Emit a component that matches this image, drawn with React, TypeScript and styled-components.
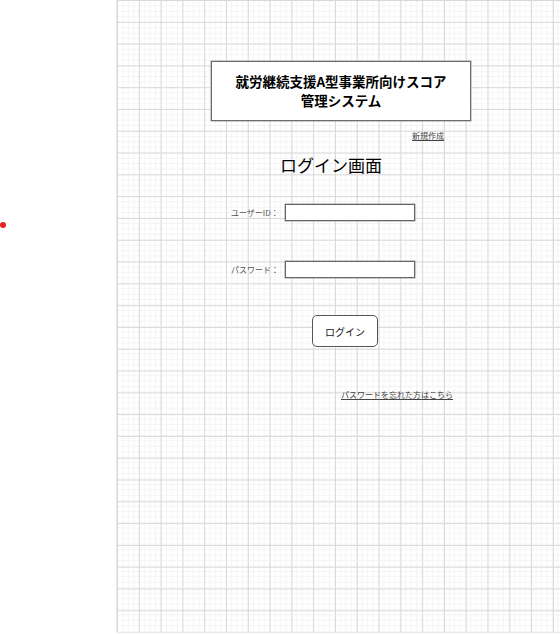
import React from "react"
import styled, { createGlobalStyle } from "styled-components"

const GlobalStyle = createGlobalStyle`
  html, body {
    margin: 0;
    padding: 0;
    background: #ffffff;
  }
  body {
    font-family: "Noto Sans CJK JP", "Noto Sans", sans-serif;
    overflow: hidden;
  }
`

const Page = styled.div`
  display: flex;
  width: 560px;
  height: 634px;
  overflow: hidden;
`

const Gutter = styled.div`
  flex: 0 0 117px;
  padding-top: 222px;
  box-sizing: border-box;
`

const Marker = styled.div`
  width: 6px;
  height: 6px;
  border-radius: 50%;
  background: #e32222;
`

const Canvas = styled.div`
  flex: 0 0 446px;
  height: 632px;
  display: flex;
  flex-direction: column;
  align-items: flex-start;
  padding-top: 61px;
  box-sizing: border-box;
  background-color: #ffffff;
  background-image: linear-gradient(#d9d9d9 1px, transparent 1px),
    linear-gradient(90deg, #d9d9d9 1px, transparent 1px),
    linear-gradient(#f4f4f4 1px, transparent 1px),
    linear-gradient(90deg, #f4f4f4 1px, transparent 1px);
  background-size: 21.8px 21.8px, 21.8px 21.8px, 5.45px 5.45px, 5.45px 5.45px;
  box-shadow: 0 0 2px rgba(0, 0, 0, 0.25);
`

interface OffsetProps {
  $left: number
  $top: number
}

const TitleBox = styled.div<OffsetProps>`
  margin-left: ${(p) => p.$left}px;
  margin-top: ${(p) => p.$top}px;
  width: 260px;
  height: 60px;
  box-sizing: border-box;
  border: 1px solid #6b6b6b;
  box-shadow: 0 0 0 0.5px #a0a0a0;
  background: #ffffff;
  display: flex;
  flex-direction: column;
  align-items: center;
  justify-content: center;
  font-size: 13.5px;
  font-weight: bold;
  line-height: 19px;
  color: #000;
  text-align: center;
`

const TitleLine = styled.span`
  display: block;
  height: 19px;
`

const SmallLink = styled.a<OffsetProps>`
  margin-left: ${(p) => p.$left}px;
  margin-top: ${(p) => p.$top}px;
  font-size: 8px;
  line-height: 10px;
  color: #444;
  text-decoration: underline;
  white-space: nowrap;
`

const Heading = styled.h1<OffsetProps>`
  margin: ${(p) => p.$top}px 0 0 ${(p) => p.$left}px;
  font-size: 17px;
  line-height: 20px;
  font-weight: normal;
  color: #000;
`

const FieldRow = styled.div<OffsetProps>`
  display: flex;
  align-items: center;
  margin-top: ${(p) => p.$top}px;
  padding-left: ${(p) => p.$left}px;
`

const Label = styled.label`
  width: 54px;
  font-size: 8px;
  line-height: 10px;
  color: #555;
  white-space: nowrap;
`

const Input = styled.input`
  width: 130px;
  height: 17px;
  box-sizing: border-box;
  border: 1px solid #666;
  box-shadow: 0 0 0 0.5px #999;
  background: #fff;
  padding: 0 3px;
  outline: none;
`

const Button = styled.button<OffsetProps>`
  margin-left: ${(p) => p.$left}px;
  margin-top: ${(p) => p.$top}px;
  width: 66px;
  height: 32px;
  box-sizing: border-box;
  border: 1px solid #555;
  border-radius: 5px;
  background: #fff;
  font-family: "Noto Sans CJK JP", "Noto Sans", sans-serif;
  font-size: 10px;
  color: #222;
  cursor: pointer;
`

const App = () => {
  return (
    <>
      <GlobalStyle />
      <Page>
        <Gutter>
          <Marker />
        </Gutter>
        <Canvas>
          <TitleBox $left={94} $top={0}>
            <TitleLine>就労継続支援A型事業所向けスコア</TitleLine>
            <TitleLine>管理システム</TitleLine>
          </TitleBox>
          <SmallLink $left={295} $top={10} href="#">
            新規作成
          </SmallLink>
          <Heading $left={163} $top={14}>
            ログイン画面
          </Heading>
          <FieldRow $left={114} $top={29}>
            <Label htmlFor="userId">ユーザーID：</Label>
            <Input id="userId" type="text" />
          </FieldRow>
          <FieldRow $left={114} $top={40}>
            <Label htmlFor="password">パスワード：</Label>
            <Input id="password" type="password" />
          </FieldRow>
          <Button $left={195} $top={37}>
            ログイン
          </Button>
          <SmallLink $left={224} $top={43} href="#">
            パスワードを忘れた方はこちら
          </SmallLink>
        </Canvas>
      </Page>
    </>
  )
}

export default App
